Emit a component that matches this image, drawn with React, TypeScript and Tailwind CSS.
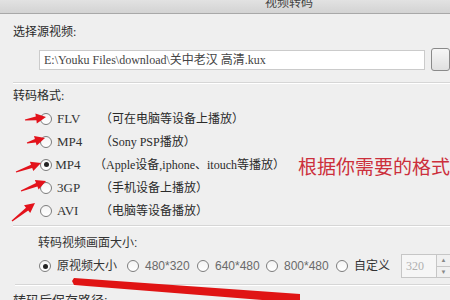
const serif = "font-['Liberation_Serif','Noto_Sans_CJK_SC',serif]";
const sans = "font-['Liberation_Sans','Noto_Sans_CJK_SC',sans-serif]";

function Radio({ checked = false }: { checked?: boolean }) {
  return (
    <span className="flex h-[12px] w-[12px] shrink-0 items-center justify-center rounded-full border border-[#7d7d7d] bg-gradient-to-b from-[#f4f4f4] to-white">
      {checked && <span className="h-[5px] w-[5px] rounded-full bg-[#222]" />}
    </span>
  );
}

function arrow(tx: number, ty: number, hx: number, hy: number) {
  const dx = hx - tx;
  const dy = hy - ty;
  const len = Math.hypot(dx, dy);
  const ux = dx / len;
  const uy = dy / len;
  const nx = -uy;
  const ny = ux;
  const head = 10;
  const hw = 5;
  const sw = 1.8;
  const bx = hx - ux * head;
  const by = hy - uy * head;
  const pts = [
    [tx + nx * 0.6, ty + ny * 0.6],
    [bx + nx * sw, by + ny * sw],
    [bx + nx * hw, by + ny * hw],
    [hx, hy],
    [bx - nx * hw, by - ny * hw],
    [bx - nx * sw, by - ny * sw],
    [tx - nx * 0.6, ty - ny * 0.6],
  ];
  return pts.map((p) => p.map((v) => v.toFixed(1)).join(",")).join(" ");
}

const formats = [
  { name: "FLV", desc: "（可在电脑等设备上播放）" },
  { name: "MP4", desc: "（Sony PSP播放）" },
  { name: "MP4", desc: "（Apple设备,iphone、itouch等播放）", checked: true },
  { name: "3GP", desc: "（手机设备上播放）" },
  { name: "AVI", desc: "（电脑等设备播放）" },
];

const sizes = [
  { label: "原视频大小", w: "w-[88px]", checked: true, dark: true },
  { label: "480*320", w: "w-[70px]" },
  { label: "640*480", w: "w-[69px]" },
  { label: "800*480", w: "w-[70px]" },
  { label: "自定义", w: "w-[65px]", dark: true },
];

function Separator({ className = "" }: { className?: string }) {
  return (
    <div className={className}>
      <div className="h-px bg-[#d6d6d6]" />
      <div className="h-px bg-white" />
    </div>
  );
}

export default function App() {
  return (
    <div className={`relative h-[300px] w-[450px] overflow-hidden bg-[#efefef] text-[#2a2a2a] ${serif}`}>
      <div className="h-[14px] overflow-hidden border-b border-[#a8a8a8] bg-gradient-to-b from-[#e2e2e2] to-[#d3d3d3]">
        <div className={`-mt-[4px] pl-[265px] text-[12px] leading-[14px] text-[#444] ${sans}`}>视频转码</div>
      </div>

      <div className="mt-[10px] pl-[13px] text-[12px] leading-[16px]">选择源视频:</div>
      <div className="mt-[8px] flex items-center">
        <div className="ml-[39px] flex h-[20px] w-[399px] items-center border border-[#cbcbcb] bg-white pl-[4px] text-[12px] text-[#444]">
          {"E:\\Youku Files\\download\\关中老汉 高清.kux"}
        </div>
        <div className="ml-[6px] h-[23px] w-[20px] rounded-[3px] border border-[#8a8a8a] bg-gradient-to-b from-[#f6f6f6] to-[#e0e0e0]" />
      </div>

      <Separator className="ml-[13px] mt-[11px]" />

      <div className="mt-[4px] pl-[13px] text-[12px] leading-[16px]">转码格式:</div>
      <div className="mt-[3px]">
        {formats.map((f, i) => (
          <div key={i} className="flex h-[23px] items-center whitespace-nowrap text-[12px]">
            <div className="ml-[40px] w-[17px]">
              <Radio checked={f.checked} />
            </div>
            <span className="w-[43px] text-[13px] text-[#333]">{f.name}</span>
            <span className={i === 2 ? "w-[204px] shrink-0" : ""}>{f.desc}</span>
            {i === 2 && (
              <span className={`mt-[6px] shrink-0 text-[19px] leading-[22px] text-[#cc2f3c] ${sans}`}>
                根据你需要的格式
              </span>
            )}
          </div>
        ))}
      </div>

      <Separator className="ml-[13px] mt-[3px]" />

      <div className={sans}>
        <div className="mt-[8px] pl-[38px] text-[12px] leading-[16px] text-[#333]">转码视频画面大小:</div>
        <div className="mt-[3px] flex h-[24px] items-center whitespace-nowrap pl-[39px] text-[12px]">
          {sizes.map((s, i) => (
            <div key={i} className={`flex shrink-0 items-center ${s.w}`}>
              <Radio checked={s.checked} />
              <span className={`ml-[6px] ${s.dark ? "text-[#333]" : "text-[#6a6a6a]"}`}>{s.label}</span>
            </div>
          ))}
          <div className={`flex h-[24px] w-[36px] shrink-0 items-center border border-[#c6c6c6] bg-[#f6f6f6] pl-[4px] text-[12px] text-[#b0b0b0] ${serif}`}>
            320
          </div>
          <div className="flex h-[24px] w-[14px] shrink-0 flex-col border border-l-0 border-[#c6c6c6] bg-[#f0f0f0]">
            <div className="flex flex-1 items-center justify-center border-b border-[#c6c6c6] text-[6px] leading-none text-[#888]">▲</div>
            <div className="flex flex-1 items-center justify-center text-[6px] leading-none text-[#888]">▼</div>
          </div>
        </div>
        <Separator className="ml-[15px] mt-[6px]" />
        <div className="mt-[7px] pl-[13px] text-[13px] leading-[16px] text-[#333]">转码后保存路径:</div>
      </div>

      <svg className="pointer-events-none absolute inset-0" width="450" height="300" viewBox="0 0 450 300">
        <g fill="#e3121b">
          <polygon points={arrow(25, 120, 46, 117)} />
          <polygon points={arrow(27, 143, 45, 138)} />
          <polygon points={arrow(16, 172, 41, 163)} />
          <polygon points={arrow(21, 191, 46, 181)} />
          <polygon points={arrow(12, 221, 35, 203)} />
        </g>
        <polygon points="72,281 74,278 300,294 300,303 74,285" fill="#e01414" />
      </svg>
    </div>
  );
}
